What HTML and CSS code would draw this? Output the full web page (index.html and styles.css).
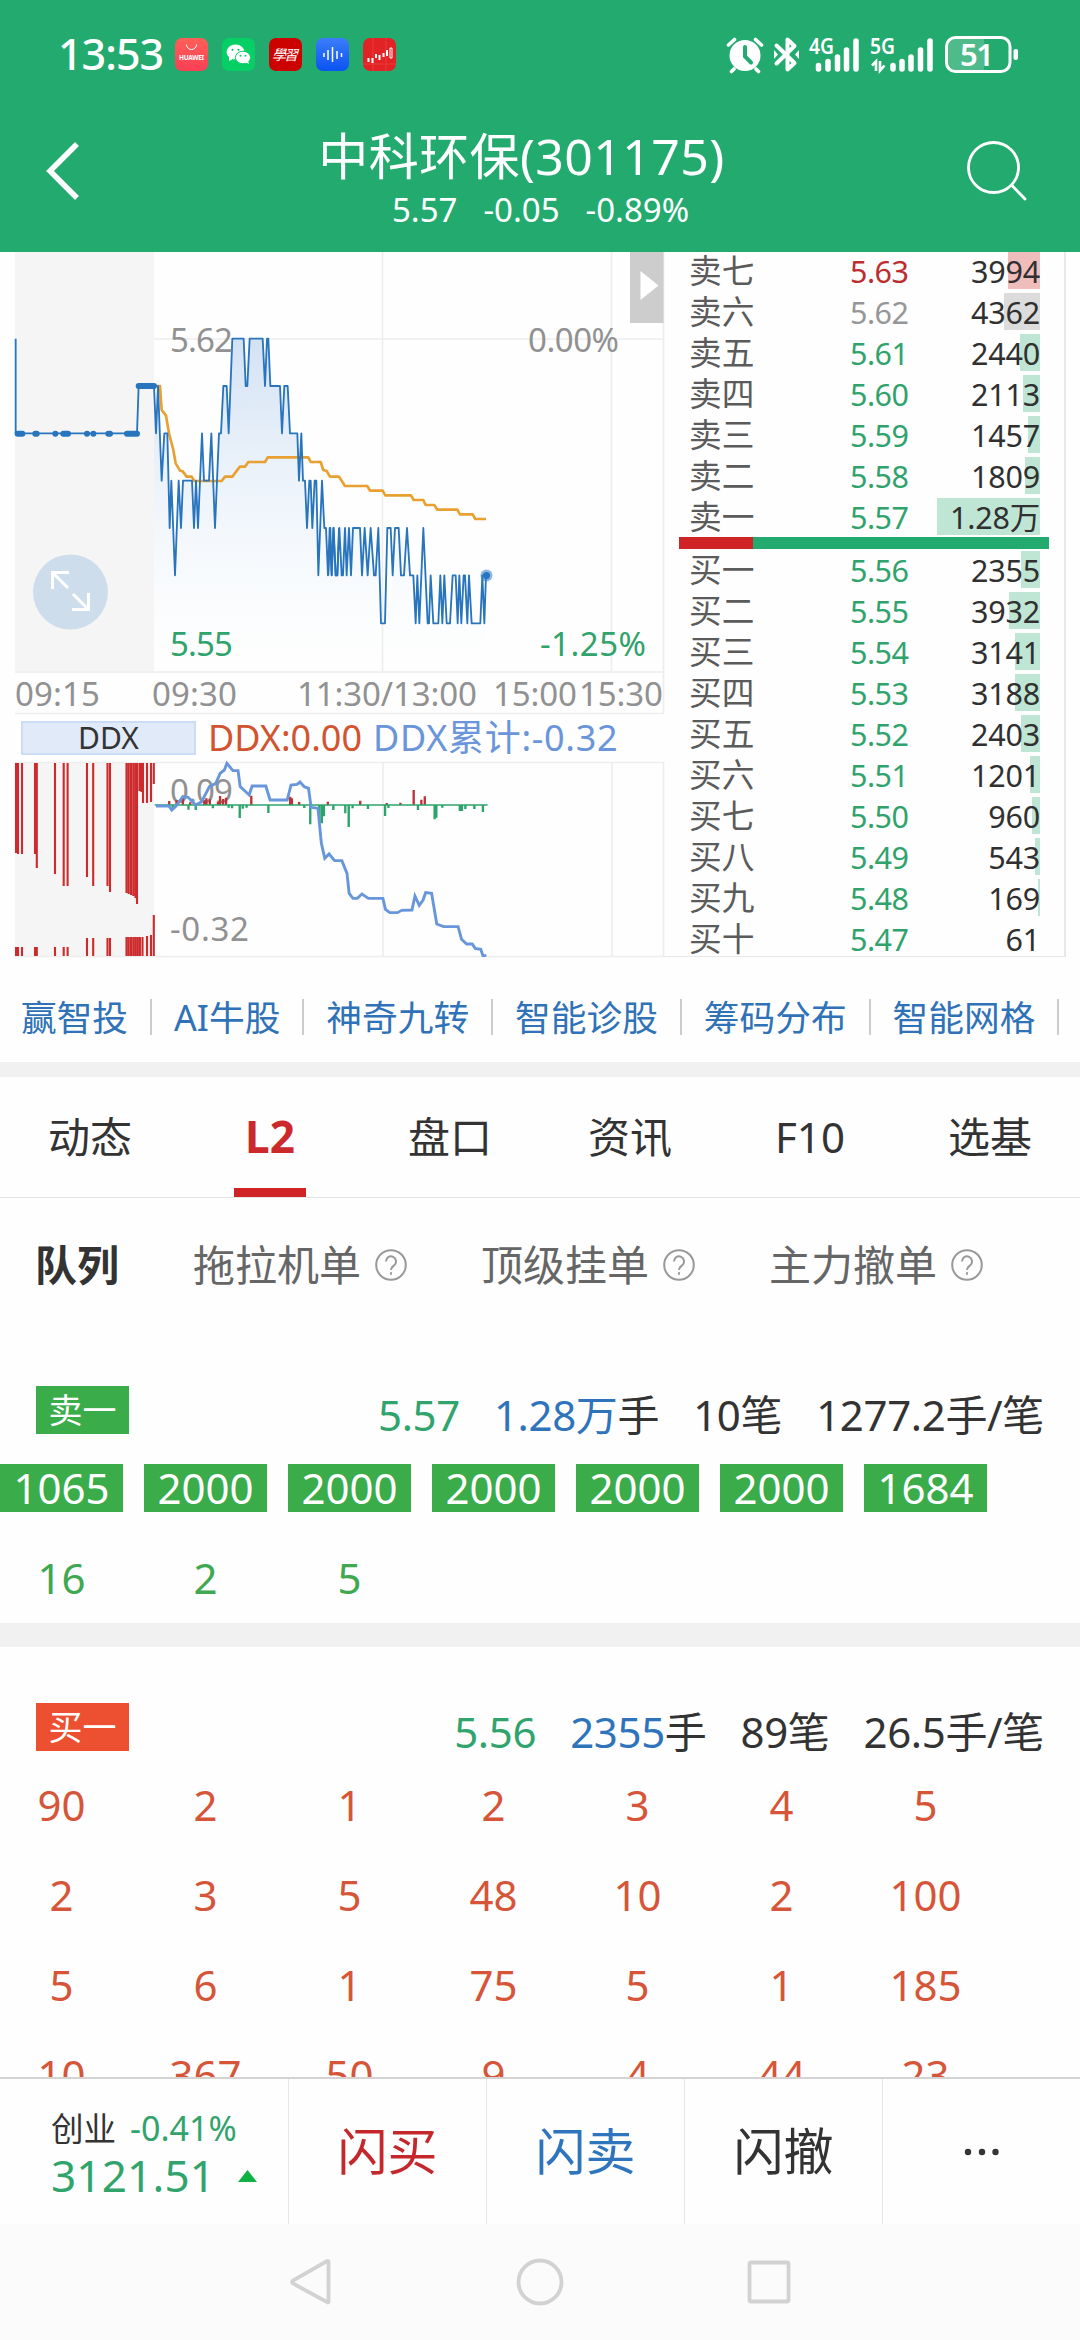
FILE: index.html
```html
<!DOCTYPE html>
<html lang="zh-CN">
<head>
<meta charset="utf-8">
<title>中科环保(301175)</title>
<link rel="stylesheet" href="styles.css">
</head>
<body>
<div class="screen">
  <header class="header">
    <div class="status">
      <span class="clock">13:53</span>
      <div class="apps">
        <svg class="app" viewBox="0 0 33 33"><defs><linearGradient id="hw" x2="0" y2="1"><stop stop-color="#ff6058"/><stop offset="1" stop-color="#fb3f55"/></linearGradient></defs><rect width="33" height="33" rx="7" fill="url(#hw)"/><path d="M11.5 6.500a5 5 0 0 0 10 0" fill="none" stroke="#fff" stroke-width="1"/><text x="4" y="21.500" textLength="25" font-size="6.500" font-weight="700" fill="#fff">HUAWEI</text></svg>
        <svg class="app" viewBox="0 0 33 33"><rect width="33" height="33" rx="7" fill="#06cf65"/><ellipse cx="13.500" cy="14" rx="9" ry="7.500" fill="#fff"/><path d="M7 18v5l4-2z" fill="#fff"/><ellipse cx="21" cy="19.500" rx="7.600" ry="6.300" fill="#fff" stroke="#06cf65"/><path d="M23 24l4 2-1-4z" fill="#fff"/><g fill="#06cf65"><circle cx="10.500" cy="11.800" r="1.100"/><circle cx="16.500" cy="11.800" r="1.100"/><circle cx="18.500" cy="17.800" r="1"/><circle cx="23.500" cy="17.800" r="1"/></g></svg>
        <svg class="app" viewBox="0 0 33 33"><rect width="33" height="33" rx="7" fill="#cc0200"/><text x="3" y="22" textLength="26" font-size="14" font-style="italic" fill="#fff">學習</text></svg>
        <svg class="app" viewBox="0 0 33 33"><defs><linearGradient id="vo" x2="0" y2="1"><stop stop-color="#3b7dfb"/><stop offset="1" stop-color="#0b53f3"/></linearGradient></defs><rect width="33" height="33" rx="7" fill="url(#vo)"/><path d="M8 15v4M12 12v10M16.500 9v15M21 13v8M25.500 15v4" stroke="#fff" stroke-width="1.500"/></svg>
        <svg class="app" viewBox="0 0 33 33"><rect width="33" height="33" rx="7" fill="#e22326"/><path d="M10 0v33M23 0v33M0 26h33" stroke="#eb4b4b" stroke-width=".6"/><path d="M5.500 20v4M9.500 20v5M13 16v4M16.500 17v5M20.500 15v4M24 12v6" stroke="#fff" stroke-width="2"/><path d="M27 10h2v10h-2z" fill="none" stroke="#fff"/></svg>
      </div>
      <svg class="indicators" viewBox="724 30 300 46" fill="none" stroke="#fff">
        <circle cx="745" cy="54.500" r="15.500" fill="#fff" stroke="none"/>
        <path d="M728.500 44l6-5.500M761.500 44l-6-5.500M734 68l-2.500 2.500M756 68l2.500 2.500" stroke-width="3.600" stroke-linecap="round"/>
        <path d="M745 46v9.500l6 6" stroke="#23ab6f" stroke-width="4" stroke-linecap="round"/>
        <path d="M776.500 44.500l18 17.500-7 6.500V38.500l7 6.500-18 17.500" stroke-width="4" stroke-linejoin="round" stroke-linecap="round"/>
        <path d="M774 49v9l4-4.500zM799 49v9l-4-4.500z" fill="#fff" stroke="none"/>
        <text class="net" x="809" y="53" textLength="25" lengthAdjust="spacingAndGlyphs">4G</text><text class="net" x="870" y="53" textLength="25" lengthAdjust="spacingAndGlyphs">5G</text>
        <g stroke-width="5.500" stroke-linecap="round"><path d="M818.500 64.500v3.500M828 60.500v7.500M837.500 56v12M846.500 49v19M856 40v28"/><path d="M893 64.500v3.500M902 60.500v7.500M911 56v12M920.500 49v19M930 40v28"/></g>
        <path d="M872 64.500l4-4v9.500M880 60v9.500l4.500-5" stroke-width="2.600"/>
        <path d="M955 38h29v31h-29a9 9 0 0 1-7-9v-14a9 9 0 0 1 7-8z" fill="#fff" fill-opacity=".2" stroke="none"/>
        <rect x="946.500" y="36.500" width="63.500" height="34" rx="9" stroke-width="3"/>
        <rect x="1013.500" y="48" width="4.500" height="11" rx="2" fill="#fff" stroke="none"/>
        <text class="batt" x="960" y="65" textLength="34">51</text>
      </svg>
    </div>
    <div class="titlebar">
      <svg class="back" viewBox="0 0 36 62"><path d="M32 4L5 31l27 27" fill="none" stroke="#fff" stroke-width="5.500"/></svg>
      <div class="heading">
        <h1>中科环保(301175)</h1>
        <div class="quote"><span>5.57</span><span>-0.05</span><span>-0.89%</span></div>
      </div>
      <svg class="search" viewBox="0 0 62 62" fill="none" stroke="#fff" stroke-width="2.800" stroke-linecap="round"><circle cx="27.500" cy="27.500" r="25"/><path d="M46 45.500l13 13.500"/></svg>
    </div>
  </header>

  <section class="market">
    <div class="charts">
      <svg class="price-chart" viewBox="0 252 664 462">
        <defs><linearGradient id="area" gradientUnits="userSpaceOnUse" x1="0" y1="270" x2="0" y2="1240"><stop stop-color="#d3e2f4"/><stop offset="1" stop-color="#edf5fc" stop-opacity="0"/></linearGradient></defs>
        <rect x="15" y="252" width="139" height="419" fill="#f5f5f5"/>
        <path d="M154 339H664M382.500 252V671M611.500 252V671M663.500 252V714M15 672H664M15 713.500H664" fill="none" stroke="#ededed" stroke-width="1.600"/>
        <g transform="translate(0 250) scale(.33333)" fill="none" stroke-linejoin="round">
          <path fill="url(#area)" d="M462 1265V408L468 550 474 408 485 692 493 550 502 550 509 834 514 692 525 976 536 692 543 834 549 692 576 692 582 834 588 692 594 834 606 550 612 692 627 692 634 550 645 834 657 550 663 550 670 408 680 408 686 550 697 266 731 266 740 408 748 266 788 266 795 408 802 266 811 408 840 408 846 550 853 408 863 408 870 550 892 550 897 692 904 550 909 692 915 692 921 834 928 692 937 834 944 692 949 692 955 976 966 692 973 834 978 834 984 976 989 834 995 976 1001 834 1009 976 1020 834 1058 834 1080 834 1142 976 1160 1120 1200 834 1230 976 1240 1120 1270 976 1290 1120 1458 1120V1265Z"/>
          <path stroke="#e8a030" stroke-width="8" d="M470 408H480L485 480 498 497 507 550 520 600 527 640 540 662 548 664 560 680H575L583 693H665L675 680H697L708 665 720 650H735L745 636H795L803 622H925L932 636H962L970 660 980 663 990 680H1017L1035 708H1102L1110 722H1148L1156 736H1233L1241 750H1270L1277 765H1303L1312 779H1372L1380 793H1418L1426 807H1458"/>
          <path stroke="#2875be" stroke-width="5.500" d="M47 266V550H411L416 408H462L468 550 474 408 485 692 493 550 502 550 509 834 514 692 525 976 536 692 543 834 549 692 576 692 582 834 588 692 594 834 606 550 612 692 627 692 634 550 645 834 657 550 663 550 670 408 680 408 686 550 697 266 731 266 737 408 742 408 749 266 788 266 795 408 801 266 805 266 811 408 840 408 846 550 853 408 863 408 870 550 892 550 897 692 904 550 909 692 915 692 921 834 928 692 932 692 937 834 944 692 949 692 955 976 966 692 973 834 978 834 984 976 989 834 995 976 1001 834 1007 976 1012 976 1017 834"/>
          <path stroke="#2875be" stroke-width="5.500" transform="translate(990 0)" d="M-5 976L1 834 5 976 10 834 17 976 22 976 28 834 35 976 39 976 45 834 50 976 57 834 63 976 69 834 90 834 96 976 104 834 113 976 122 834 132 976 137 976 145 834 153 1120 165 1120 172 834 182 834 188 976 195 834 206 834 213 976 222 976 231 834 240 976 250 976 257 1120 262 976 268 1120 280 834 293 1120 297 1120 302 976 310 1120 325 1120 331 976 337 1120 343 976 350 1120 360 1120 368 976 377 976 383 1120 388 976 394 1120 401 976 405 976 412 1120 417 976 425 1120 451 1120 457 976 463 1120 468 976"/>
          <path stroke="#2875be" stroke-width="18" stroke-linecap="round" d="M53 551h14M106 551h4M166 551h.1M190 551h14M261 551h.1M280 551h.1M325 551h5M381 551h30M416 408h46"/>
        </g>
        <circle cx="486.500" cy="575.500" r="6" fill="#2f7bcb" opacity=".55"/><circle cx="486.500" cy="575.500" r="3.500" fill="#2875be"/>
        <g class="axis">
          <text x="170" y="352" textLength="63">5.62</text><text x="528" y="352" textLength="91">0.00%</text>
          <text class="down" x="170" y="656" textLength="63">5.55</text><text class="down" x="540" y="656" textLength="106">-1.25%</text>
          <text x="15" y="706" textLength="85">09:15</text><text x="152" y="706" textLength="85">09:30</text><text x="297" y="706" textLength="180">11:30/13:00</text><text x="493" y="706" textLength="84">15:00</text><text x="579" y="706" textLength="84">15:30</text>
        </g>
        <circle cx="70.500" cy="592" r="37.500" fill="#cdddec"/>
        <path d="M69 572.500H52.500V589M53 573l15 15M88.500 593v16.500H72M88 609l-15-15" fill="none" stroke="#fff" stroke-width="3"/>
        <path d="M630 252h33.500v71H630z" fill="#cdcdcd"/><path d="M640.500 271l18 14.500-18 14.500z" fill="#fff"/>
      </svg>
      <div class="indicator"><span class="pick">DDX</span><span class="ddx">DDX:0.00</span><span class="sum">DDX累计:-0.32</span></div>
      <svg class="ddx-chart" viewBox="0 762 664 195">
        <path d="M15 762h139v195H15z" fill="#f5f5f5"/>
        <path d="M15 762.500H664M383 762V957M612 762V957M663.500 762V957M15 956.500H664" fill="none" stroke="#ededed" stroke-width="1.600"/>
        <g class="axis"><text x="170" y="803" textLength="63">0.09</text><text x="170" y="941" textLength="79">-0.32</text></g>
        <path stroke="#cc2a2c" stroke-width="2.100" d="M16 763V853M18 763V854M22 763V854M35 763V854M36.800 763V868M55 763V874M63.700 763V886M67.600 763V886M87 763V877M93.200 763V886M107.500 763V886M110 763V892M126.500 763V893M128.700 763V894M131 763V895M133.300 763V896M135.500 763V898M137 763V904M139.500 763V791M141.500 763V792M143 763V803M147 763V803M151 763V802M153.800 763V784M16 947V956M18 947V956M22 947V956M35 947V956M36.800 947V956M55 947V956M63.700 947V956M67.600 947V956M87 938V956M93.200 938V956M107.500 938V956M110 938V956M126.500 937V956M128.700 937V956M131 937V956M133.300 937V956M135.500 937V956M137.700 937V956M139.900 937V956M142.500 937V956M147 936V956M151 935V956M153.800 915V956"/>
        <g transform="translate(0 670) scale(.42735 .33333)" fill="none">
          <path class="rise" d="M396 405v-12M413 405v-14M428 405v-20M445 405v-8M478 405v-14M483 405v-20M491 405v-17M510 405v-10M515 405v-27M522 405v-18M529 405v-22M588 405v-28M679 405v-25M683 405v-20M700 405v-9M767 405v-10M843 405v-13M905 405v-6M937 405v-7M968 405v-45M986 405v-16M994 405v-26"/>
          <path class="fall" d="M404 405v11M441 405v14M458 405v15M498 405v10M535 405v8M543 405v10M561 405v39M568 405v11M577 405v8M628 405v24M712 405v9M726 405v58M747 405v53M753 405v55M758 405v34M780 405v15M808 405v25M816 405v66M825 405v10M861 405v12M901 405v33M909 405v9M978 405v15M1017 405v43M1021 405v38M1035 405v8M1076 405v18M1081 405v18M1089 405v12M1110 405v12M1130 405v21"/>
          <path stroke="#2ca56b" stroke-width="1.700" vector-effect="non-scaling-stroke" d="M362 405H1141"/>
          <path stroke="#6796db" stroke-width="2.900" vector-effect="non-scaling-stroke" d="M365 408H395L402 420 412 408 428 380 440 382 458 405 472 395 490 350 505 340 515 310 525 300 531 280 545 302H557L562 350 583 375 590 348H622L632 390H672L681 345 695 343 702 336 712 350 722 355 728 412 744 415 752 520 760 565 770 552 783 572H800L812 610 817 670 826 685H836L847 672 862 685H896L902 718 912 728H930L940 721 964 720 971 678 981 706 990 690 996 668 1010 670 1022 762 1038 770H1072L1080 808 1092 822H1105L1112 835 1125 838 1130 857H1138"/>
        </g>
      </svg>
    </div>
    <div class="book">
      <div class="row"><b>卖七</b><i class="up">5.63</i><em class="red"><u style="width:32px"></u>3994</em></div>
      <div class="row"><b>卖六</b><i class="flat">5.62</i><em class="grey"><u style="width:36px"></u>4362</em></div>
      <div class="row"><b>卖五</b><i>5.61</i><em><u style="width:20px"></u>2440</em></div>
      <div class="row"><b>卖四</b><i>5.60</i><em><u style="width:17px"></u>2113</em></div>
      <div class="row"><b>卖三</b><i>5.59</i><em><u style="width:12px"></u>1457</em></div>
      <div class="row"><b>卖二</b><i>5.58</i><em><u style="width:15px"></u>1809</em></div>
      <div class="row"><b>卖一</b><i>5.57</i><em><u style="width:103px"></u>1.28万</em></div>
      <div class="ratio"></div>
      <div class="row"><b>买一</b><i>5.56</i><em><u style="width:19px"></u>2355</em></div>
      <div class="row"><b>买二</b><i>5.55</i><em><u style="width:31px"></u>3932</em></div>
      <div class="row"><b>买三</b><i>5.54</i><em><u style="width:25px"></u>3141</em></div>
      <div class="row"><b>买四</b><i>5.53</i><em><u style="width:25px"></u>3188</em></div>
      <div class="row"><b>买五</b><i>5.52</i><em><u style="width:19px"></u>2403</em></div>
      <div class="row"><b>买六</b><i>5.51</i><em><u style="width:10px"></u>1201</em></div>
      <div class="row"><b>买七</b><i>5.50</i><em><u style="width:8px"></u>960</em></div>
      <div class="row"><b>买八</b><i>5.49</i><em><u style="width:5px"></u>543</em></div>
      <div class="row"><b>买九</b><i>5.48</i><em><u style="width:2px"></u>169</em></div>
      <div class="row"><b>买十</b><i>5.47</i><em>61</em></div>
    </div>
  </section>

  <nav class="links"><a>赢智投</a><a>AI牛股</a><a>神奇九转</a><a>智能诊股</a><a>筹码分布</a><a>智能网格</a></nav>

  <nav class="tabs"><a>动态</a><a class="active">L2</a><a>盘口</a><a>资讯</a><a>F10</a><a>选基</a></nav>

  <nav class="subtabs">
    <a class="current">队列</a>
    <a>拖拉机单<svg class="help" viewBox="0 0 32 32"><circle cx="16" cy="16" r="14.800"/><path d="M11 12.500a5 5 0 1 1 8.200 3.700c-2 1.500-3.200 2.300-3.200 4.800M16 23.200v2.600"/></svg></a>
    <a>顶级挂单<svg class="help" viewBox="0 0 32 32"><circle cx="16" cy="16" r="14.800"/><path d="M11 12.500a5 5 0 1 1 8.200 3.700c-2 1.500-3.200 2.300-3.200 4.800M16 23.200v2.600"/></svg></a>
    <a>主力撤单<svg class="help" viewBox="0 0 32 32"><circle cx="16" cy="16" r="14.800"/><path d="M11 12.500a5 5 0 1 1 8.200 3.700c-2 1.500-3.200 2.300-3.200 4.800M16 23.200v2.600"/></svg></a>
  </nav>

  <section class="queue sell">
    <div class="summary"><span class="tag">卖一</span><span class="px">5.57</span><span><span class="vol">1.28万</span>手</span><span>10笔</span><span>1277.2手/笔</span></div>
    <div class="orders">
      <span class="big">1065</span><span class="big">2000</span><span class="big">2000</span><span class="big">2000</span><span class="big">2000</span><span class="big">2000</span><span class="big">1684</span>
      <span>16</span><span>2</span><span>5</span>
    </div>
  </section>

  <section class="queue buy">
    <div class="summary"><span class="tag">买一</span><span class="px">5.56</span><span><span class="vol">2355</span>手</span><span>89笔</span><span>26.5手/笔</span></div>
    <div class="orders">
      <span>90</span><span>2</span><span>1</span><span>2</span><span>3</span><span>4</span><span>5</span>
      <span>2</span><span>3</span><span>5</span><span>48</span><span>10</span><span>2</span><span>100</span>
      <span>5</span><span>6</span><span>1</span><span>75</span><span>5</span><span>1</span><span>185</span>
      <span>10</span><span>367</span><span>50</span><span>9</span><span>4</span><span>44</span><span>23</span>
    </div>
  </section>

  <footer class="actions">
    <div class="index">
      <div class="index-top"><span>创业</span><span class="chg">-0.41%</span></div>
      <div class="index-val"><span>3121.51</span><svg class="tri" viewBox="0 0 19 12"><path d="M9.500 0L19 12H0z" fill="#10b144"/></svg></div>
    </div>
    <a class="act-buy">闪买</a><a class="act-sell">闪卖</a><a>闪撤</a>
    <a><svg class="more" viewBox="0 0 36 8" fill="#333"><circle cx="4" cy="4" r="3.200"/><circle cx="18" cy="4" r="3.200"/><circle cx="31.500" cy="4" r="3.200"/></svg></a>
  </footer>
  <div class="sysnav">
    <svg viewBox="0 0 48 48"><path d="M41.500 4V44Q41 45 40 44L6 25.500Q4 24 6 22.500L40 3Q41.500 2.500 41.500 4Z"/></svg>
    <svg viewBox="0 0 48 48"><circle cx="24" cy="24" r="21.500"/></svg>
    <svg viewBox="0 0 48 48"><rect x="4.500" y="4.500" width="39" height="39" rx="1.500"/></svg>
  </div>
</div>
</body>
</html>
```
FILE: styles.css
```css
* { box-sizing: border-box; }
body { margin: 0; background: #fff; color: #333; font-family: "Noto Sans", "Noto Sans CJK SC", sans-serif; }
svg { display: block; flex: none; overflow: visible; }
.screen { width: 1080px; height: 2340px; display: flex; flex-direction: column; overflow: hidden; background: #fefefe; }
.screen > * { flex: none; }

.header { height: 252px; background: #23ab6f; color: #fff; }
.status { height: 108px; display: flex; align-items: center; padding: 0 56px 0 58px; }
.clock { width: 117px; font-size: 43px; font-weight: 500; line-height: 60px; letter-spacing: -1px; }
.apps { display: flex; gap: 14px; }
.app { width: 33px; height: 33px; }
.indicators { width: 300px; height: 46px; margin-left: auto; }
.net { font-size: 22px; font-weight: 600; fill: #fff; stroke: none; }
.batt { font-size: 31px; font-weight: 600; fill: #fff; stroke: none; }
.titlebar { display: flex; justify-content: space-between; padding: 16px 52px 0 45px; }
.back { width: 36px; height: 62px; margin-top: 16px; }
.search { width: 62px; height: 62px; margin-top: 16px; }
.heading { display: flex; flex-direction: column; align-items: center; padding-left: 34px; }
h1 { margin: 0 38px 0 0; font-size: 50px; line-height: 64px; font-weight: 400; letter-spacing: .4px; }
.quote { display: flex; gap: 26px; font-size: 33px; line-height: 43px; }

.market { height: 705px; display: flex; }
.charts { width: 664px; }
.price-chart { width: 664px; height: 462px; }
.axis { font-size: 33px; fill: #919191; }
.axis .down { fill: #30a36c; }
.indicator { height: 48px; display: flex; align-items: center; padding-left: 21px; font-size: 36px; line-height: 48px; white-space: nowrap; }
.pick { width: 175px; height: 34px; border: 2px solid #cbdcf5; background: #e0eaf8; color: #333; font-size: 30px; line-height: 30px; text-align: center; letter-spacing: 0; }
.ddx { width: 166px; padding-left: 12px; color: #d25330; }
.sum { padding-left: 11px; color: #6a95da; letter-spacing: .7px; }
.ddx-chart { width: 664px; height: 195px; }
.rise { stroke: #bb3338; stroke-width: 5.500px; }
.fall { stroke: #2ba36a; stroke-width: 5.500px; }
.book { width: 402px; height: 705px; padding: 0 17px 0 15px; border-right: 2px solid #e8e8e8; border-bottom: 1.500px solid #e8e8e8; overflow: hidden; }
.row { display: grid; grid-template-columns: 161px 90px 1fr; height: 37px; margin-bottom: 4px; padding: 0 7px 0 10px; font-size: 30.500px; line-height: 38px; white-space: nowrap; }
.row:nth-child(7) { margin-bottom: 2px; }
.row b { font-weight: 400; font-size: 32.700px; color: #5b5b5b; }
.row i { font-style: normal; color: #30a36c; letter-spacing: -.5px; }
.row .up { color: #bb2d2e; }
.row .flat { color: #969696; }
.row em { position: relative; isolation: isolate; font-style: normal; text-align: right; letter-spacing: -.2px; color: #303030; }
.row u { position: absolute; right: 0; top: 0; z-index: -1; height: 37px; background: #bfe6d4; }
.row .red u { background: #f0bdbd; }
.row .grey u { background: #dcdcdc; }
.ratio { width: 370px; height: 12px; margin-bottom: 2px; background: linear-gradient(to right, #cf2326 74px, #23ab6f 74px); }

.links { height: 105px; display: flex; align-items: center; padding: 14px 0 0 21px; color: #2f72b8; font-size: 35.700px; line-height: 36px; white-space: nowrap; overflow: hidden; }
.links a { display: flex; align-items: center; }
.links a::after { content: ""; width: 2px; height: 36px; margin: 0 22px; background: #ccc; }
.tabs { height: 136px; display: grid; grid-template-columns: repeat(6, 1fr); border-top: 15px solid #f1f1f1; border-bottom: 1px solid #e4e4e4; font-size: 42px; line-height: 119px; text-align: center; }
.active { height: 120px; display: flex; flex-direction: column; align-items: center; color: #cb292c; font-size: 44px; font-weight: 700; }
.active::after { content: ""; width: 72px; height: 9px; margin-top: -8px; background: #cf2326; }
.subtabs { height: 133px; display: flex; gap: 74px; padding-left: 35px; color: #666; font-size: 42px; line-height: 132px; }
.subtabs a { display: flex; align-items: center; gap: 14px; }
.subtabs .current { color: #333; font-weight: 700; }
.help { width: 32px; height: 32px; fill: none; stroke: #999; stroke-width: 2; }

.queue { padding-top: 55px; }
.sell { height: 316px; border-bottom: 24px solid #f1f1f1; }
.buy { height: 430px; padding-top: 56px; overflow: hidden; }
.summary { height: 48px; display: flex; justify-content: flex-end; gap: 34px; padding: 0 36px; font-size: 42px; line-height: 58px; letter-spacing: -.35px; white-space: nowrap; }
.tag { width: 93px; height: 48px; margin-right: auto; color: #fff; font-size: 34px; line-height: 49px; letter-spacing: 0; text-align: center; }
.px { color: #30a46c; }
.vol { color: #2f74bb; }
.orders { display: grid; grid-template-columns: repeat(7, 123px); grid-auto-rows: 48px; gap: 42px 21px; padding-top: 30px; font-size: 42px; line-height: 48px; text-align: center; }
.sell .orders { color: #40a850; }
.sell .tag, .sell .big { background: #3bac4a; color: #fff; }
.buy .orders { color: #d65539; }
.buy .tag { background: #ec5030; }

.actions { height: 147px; display: grid; grid-template-columns: 288px repeat(4, 198px); border-top: 2px solid #d3d3d3; background: #fefefe; font-size: 50px; line-height: 145px; }
.actions a { display: flex; align-items: center; justify-content: center; border-left: 1.500px solid #e6e6e6; }
.act-buy { color: #c4282c; }
.act-sell { color: #2f75be; }
.index { padding: 28px 0 0 51px; }
.index-top { display: flex; gap: 14px; height: 44px; font-size: 32.500px; line-height: 43px; }
.index-val { display: flex; align-items: center; gap: 23px; height: 48px; font-size: 44px; line-height: 48px; letter-spacing: .2px; color: #30a46c; }
.chg { color: #30a46c; font-size: 34px; }
.tri { width: 19px; height: 12px; margin-top: 2px; }
.more { width: 36px; height: 8px; }
.sysnav { height: 116px; display: flex; justify-content: center; align-items: center; gap: 181px; background: #fbfbfb; }
.sysnav svg { width: 48px; height: 48px; fill: none; stroke: #d2d2d2; stroke-width: 3.800; }
```
